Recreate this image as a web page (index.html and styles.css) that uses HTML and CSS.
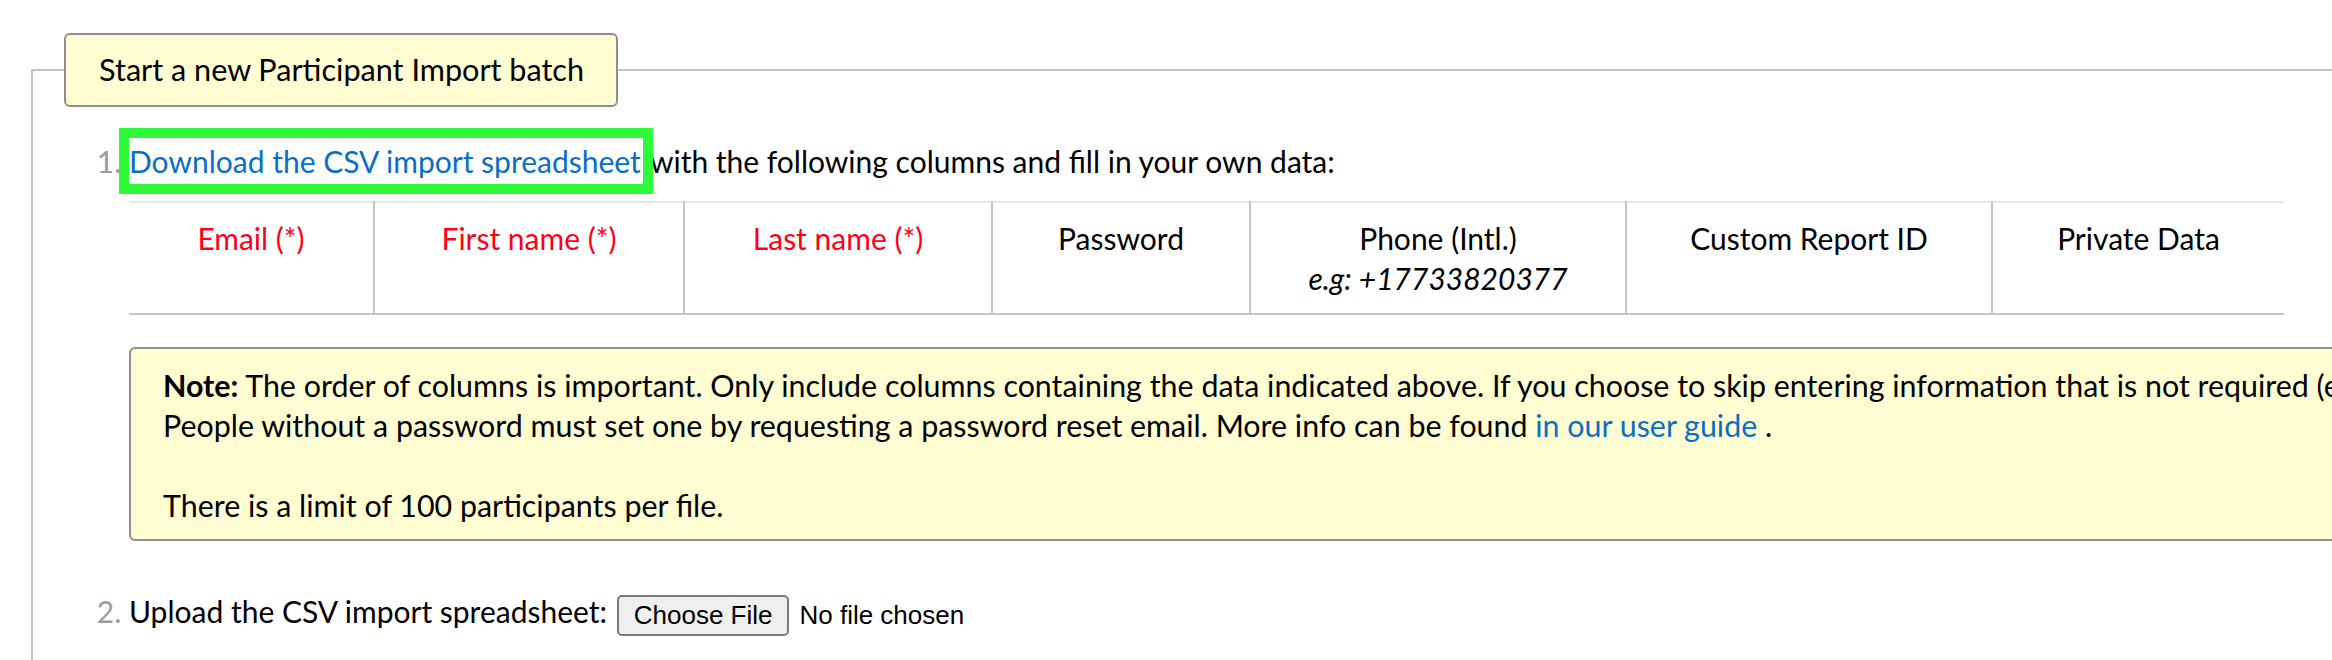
FILE: index.html
```html
<!DOCTYPE html>
<html lang="en">
<head>
<meta charset="utf-8">
<title>Participant Import</title>
<link rel="stylesheet" href="styles.css">
</head>
<body>
<div class="page">
  <fieldset class="batch">
    <legend class="batch-title">Start a new Participant Import batch</legend>
    <ol class="steps">
      <li class="step step-download">
        <p class="step-text"><a class="csv-link" href="#">Download the CSV import spreadsheet</a> with the following columns and fill in your own data:</p>
        <table class="columns">
          <colgroup>
            <col class="w-email">
            <col class="w-first">
            <col class="w-last">
            <col class="w-pass">
            <col class="w-phone">
            <col class="w-custom">
            <col class="w-private">
          </colgroup>
          <tr>
            <td class="req">Email (*)</td>
            <td class="req">First name (*)</td>
            <td class="req">Last name (*)</td>
            <td>Password</td>
            <td>Phone (Intl.)<br><em class="hint">e.g: +17733820377</em></td>
            <td>Custom Report ID</td>
            <td>Private Data</td>
          </tr>
        </table>
        <div class="note">
          <strong>Note:</strong> The order of columns is important. Only include columns containing the data indicated above. If you choose to skip entering information that is not required (e.g. Password), leave the column empty.<br>
          People without a password must set one by requesting a password reset email. More info can be found <a class="guide-link" href="#">in our user guide</a> .<br>
          <br>
          There is a limit of 100 participants per file.
        </div>
      </li>
      <li class="step step-upload">Upload the CSV import spreadsheet: <input class="file-input" type="file"></li>
    </ol>
  </fieldset>
</div>
</body>
</html>
```

FILE: styles.css
```css
html, body {
  margin: 0;
  padding: 0;
  overflow: hidden;
  background: #ffffff;
}

.page {
  padding: 33px 0 0 31px;
  width: 3400px;
  font-family: Lato, "Noto Sans", sans-serif;
  font-size: 30px;
  line-height: 40px;
  color: #000000;
}

.batch {
  margin: 0;
  padding: 0 0 200px 0;
  border: 2px solid #c4c4c4;
  min-width: 0;
}

.batch-title {
  margin-left: 31px;
  padding: 15px 32px 15px 33px;
  background: #fffdd2;
  border: 2px solid #8e8e8e;
  border-radius: 6px;
  font-size: 30.6px;
  line-height: 40px;
}

.steps {
  margin: 34px 0 0 0;
  padding: 0 0 0 96px;
}

.step::marker {
  color: #9b9b9b;
}

.step-text {
  margin: 0;
}

.csv-link {
  color: #0a6fc2;
  text-decoration: none;
  padding: 5px 2px 5px 0;
  outline: 10px solid #2ef93a;
}

.columns {
  margin-top: 20px;
  border-collapse: collapse;
  table-layout: fixed;
  width: 2155px;
  border-top: 2px solid #e8e8e8;
  border-bottom: 2px solid #c6c6c6;
}

.w-email { width: 245px; }
.w-first { width: 310px; }
.w-last { width: 308px; }
.w-pass { width: 258px; }
.w-phone { width: 376px; }
.w-custom { width: 366px; }
.w-private { width: 292px; }

.columns td {
  padding: 15px 8px;
  text-align: center;
  vertical-align: top;
  border-left: 2px solid #c6c6c6;
}

.columns td:first-child {
  border-left: none;
}

.columns .req {
  color: #ff0018;
}

.hint {
  font-style: italic;
}

.note {
  margin-top: 32px;
  padding: 16px 32px 14px 32px;
  background: #fffdd2;
  border: 2px solid #8e8e8e;
  border-radius: 6px;
  font-size: 30.4px;
}

.guide-link {
  color: #0a6fc2;
  text-decoration: none;
}

.step-upload {
  margin-top: 50px;
}

.file-input {
  font-family: "Liberation Sans", Arial, sans-serif;
  font-size: 26px;
  color: #000000;
  vertical-align: middle;
  margin-left: 2px;
}

.file-input::file-selector-button {
  font-family: "Liberation Sans", Arial, sans-serif;
  font-size: 26px;
  color: #000000;
  background: #efefef;
  border: 2px solid #7b7b7b;
  border-radius: 5px;
  padding: 3px 15px;
  margin-right: 10px;
}
```
